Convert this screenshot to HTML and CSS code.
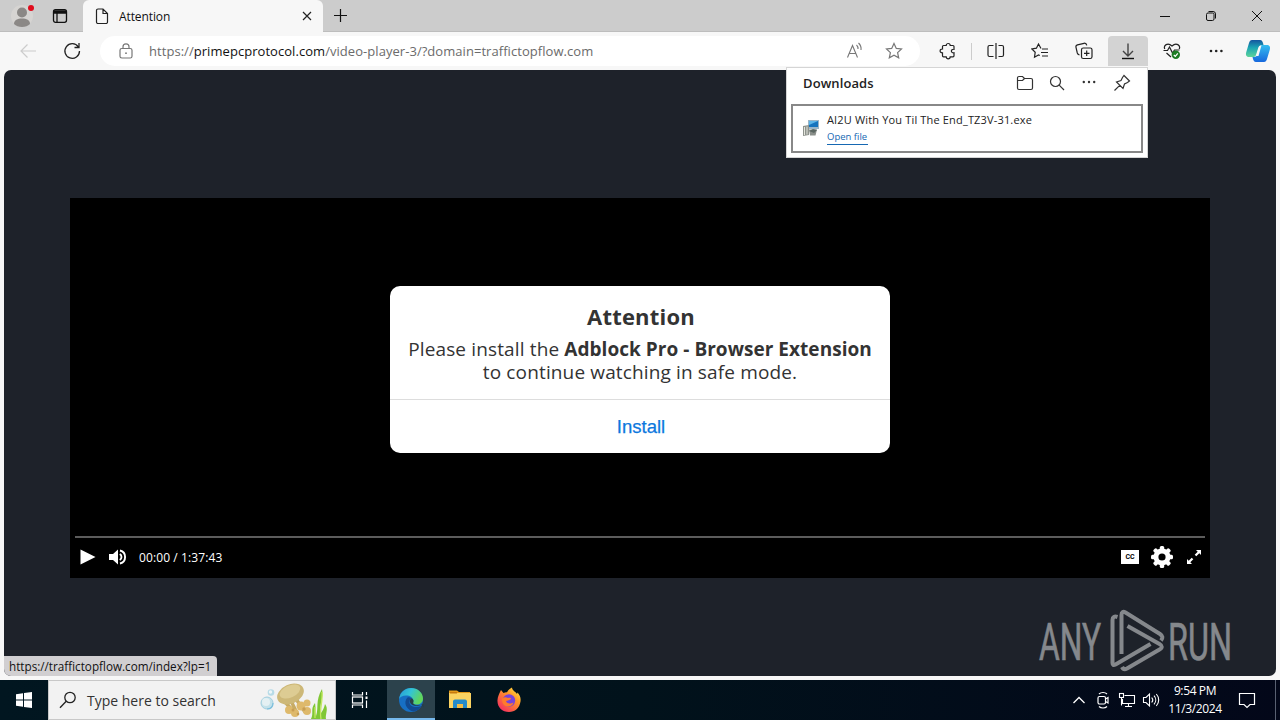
FILE: index.html
```html
<!DOCTYPE html>
<html lang="en">
<head>
	<meta charset="utf-8">
	<title>Attention</title>
	<link rel="stylesheet" href="styles.css">
</head>
<body>

<div class="tabbar">
	<div class="profile">
		<svg width="26" height="28" viewBox="0 0 26 28"><circle cx="12" cy="14" r="11" fill="#d6d4d2"/><circle cx="12" cy="10.500" r="5" fill="#8b8886"/><path d="M4 22c0-4 3.500-5.500 8-5.500s8 1.500 8 5.500c-2 2-4.500 3-8 3s-6-1-8-3z" fill="#8b8886"/><circle cx="21" cy="6" r="3" fill="#e00b1c"/></svg>
	</div>
	<div class="workspaces">
		<svg width="16" height="16" viewBox="0 0 16 16" fill="none" stroke="#111" stroke-width="1.300"><rect x="1.500" y="1.700" width="13" height="12.600" rx="2"/><path d="M2 4h12" stroke-width="3.500"/><path d="M5 4v10"/></svg>
	</div>
	<div class="tab">
		<svg width="14" height="17" viewBox="0 0 14 17" fill="none" stroke="#222" stroke-width="1.200"><path d="M3 1h5l4.500 4.500V14a1.500 1.500 0 0 1-1.500 1.500H3A1.500 1.500 0 0 1 1.500 14V2.500A1.500 1.500 0 0 1 3 1zM8 1v4.500h4.500"/></svg>
		<span class="tab-title">Attention</span>
		<svg width="10" height="10" viewBox="0 0 10 10" stroke="#222" stroke-width="1.200"><path d="M1 1l8 8M9 1L1 9"/></svg>
	</div>
	<div class="newtab">
		<svg width="15" height="15" viewBox="0 0 15 15" stroke="#111" stroke-width="1.200"><path d="M7.500 1v13M1 7.500h13"/></svg>
	</div>
	<div class="window-buttons">
		<span><svg width="10" height="10" viewBox="0 0 10 10" stroke="#111"><path d="M0 5.500h10"/></svg></span>
		<span><svg width="10" height="10" viewBox="0 0 10 10" fill="none" stroke="#111"><rect x=".5" y="2" width="7.500" height="7.500" rx="1.500"/><path d="M2.500.5H7A2.500 2.500 0 0 1 9.500 3v4.500"/></svg></span>
		<span><svg width="10" height="10" viewBox="0 0 10 10" stroke="#111"><path d="M0 0l10 10M10 0L0 10"/></svg></span>
	</div>
</div>

<div class="toolbar">
	<div class="nav back"><svg width="18" height="16" viewBox="0 0 18 16" fill="none" stroke="#ccc" stroke-width="1.200"><path d="M17 8H2M8.500 1.500L2 8l6.500 6.500"/></svg></div>
	<div class="nav reload"><svg width="18" height="18" viewBox="0 0 18 18" fill="none" stroke="#222" stroke-width="1.300"><path d="M15.300 5A7.300 7.300 0 1 0 16.500 9M16 1v4.500h-4.500"/></svg></div>
	<div class="address">
		<svg class="lock" width="14" height="16" viewBox="0 0 14 16" fill="none" stroke="#777" stroke-width="1.200"><rect x="1" y="5.500" width="12" height="9.500" rx="1.800"/><path d="M4 5.500V3.800a3 3 0 0 1 6 0v1.700"/><circle cx="7" cy="10.200" r=".9" fill="#777" stroke="none"/></svg>
		<span class="url">https://<b>primepcprotocol.com</b>/video-player-3/?domain=traffictopflow.com</span>
		<svg class="read" width="18" height="18" viewBox="0 0 18 18" fill="none" stroke="#777" stroke-width="1.100"><path d="M1.500 15.500l5-12 5 12M3.300 11.500h6.500M10.500 3a5 5 0 0 1 1.500 4M12.500 1a8 8 0 0 1 2.500 7"/></svg>
		<svg width="18" height="18" viewBox="0 0 18 18" fill="none" stroke="#777" stroke-width="1.200"><path d="M9 1.500l2.300 4.900 5.200.6-3.900 3.600 1.100 5.300L9 13.300l-4.700 2.600 1.100-5.300L1.500 7l5.200-.6z"/></svg>
	</div>
	<div class="tools">
		<div class="tool"><svg width="18" height="18" viewBox="0 0 18 18" fill="none" stroke="#222" stroke-width="1.200"><path d="M4.500 3.500h2.700a2 2 0 0 1 4 0H14a1 1 0 0 1 1 1v2.800c-3.500-.5-3.500 4 0 3.500v3a1 1 0 0 1-1 1h-2.800a2 2 0 0 1-4 0H4.500a1 1 0 0 1-1-1v-3c-3.200.2-3.200-4 0-3.800V4.500a1 1 0 0 1 1-1z"/></svg></div>
		<i class="sep"></i>
		<div class="tool"><svg width="18" height="18" viewBox="0 0 18 18" fill="none" stroke="#222" stroke-width="1.200"><path d="M9 1v16M6.500 3.500h-4A1.500 1.500 0 0 0 1 5v8a1.500 1.500 0 0 0 1.500 1.500h4M11.500 3.500H15A1.500 1.500 0 0 1 16.500 5v8a1.500 1.500 0 0 1-1.500 1.500h-3.500"/></svg></div>
		<div class="tool"><svg width="18" height="18" viewBox="0 0 18 18" fill="none" stroke="#222" stroke-width="1.200"><path d="M10 6.500L7.500 2 5.400 6.200.9 7l3.300 3.300-.7 4.900 4-2.300 1.300.6M11 7h6M10 10.500h7M11 14h6"/></svg></div>
		<div class="tool"><svg width="18" height="18" viewBox="0 0 18 18" fill="none" stroke="#222" stroke-width="1.200"><rect x="6.500" y="6" width="10.500" height="10.500" rx="1.800"/><path d="M11.700 8.500v5.500M9 11.300h5.500M4.500 13C2.800 12.400 2.600 12 2.300 11L1 5.300c-.3-1.200.4-2.200 1.500-2.500l6.500-1.500c1.500-.3 2.400.3 2.800 2"/></svg></div>
		<div class="tool active"><svg width="16" height="18" viewBox="0 0 16 18" fill="none" stroke="#444" stroke-width="1.400"><path d="M8 1.500v12M3 9l5 5 5-5"/><path d="M2 16.500h12" stroke="#111"/></svg></div>
		<div class="tool"><svg width="18" height="18" viewBox="0 0 18 18" fill="none" stroke="#222" stroke-width="1.200"><path d="M1.800 7C.2 3.500 4.500-.2 9 4c4.500-4.200 8.800-.5 7.200 3M.5 8.500h4L6.500 5l3 6 2-3h5M3.500 11L8 15"/><circle cx="12.800" cy="12.800" r="4.200" fill="#1c7c23" stroke="none"/><path d="M10.800 13l1.500 1.300 2.500-3" stroke="#fff"/></svg></div>
		<div class="tool"><svg width="16" height="4" viewBox="0 0 16 4" fill="#222"><circle cx="3" cy="2" r="1.300"/><circle cx="8.200" cy="2" r="1.300"/><circle cx="13.400" cy="2" r="1.300"/></svg></div>
		<div class="copilot"><svg width="26" height="24" viewBox="0 0 26 24">
			<defs>
				<linearGradient id="cpLeft" x1="0" y1="0" x2="0" y2="1"><stop offset="0" stop-color="#14569f"/><stop offset=".45" stop-color="#1ba5b4"/><stop offset="1" stop-color="#5fd49a"/></linearGradient>
				<linearGradient id="cpRight" x1="0" y1="0" x2="0" y2="1"><stop offset="0" stop-color="#35bdf0"/><stop offset="1" stop-color="#1768dd"/></linearGradient>
			</defs>
			<path d="M7 1h8c2 0 2.500 1.500 3 3l.5 2c-3 0-4.500.5-5.300 3L11 16c-.6 1.600-1.500 2-3 2H4c-3 0-3.500-2.500-2.700-5L4 4c.6-2 1.500-3 3-3z" fill="url(#cpLeft)"/>
			<path d="M19 23h-8c-2 0-2.500-1.500-3-3l-.5-2c3 0 4.500-.5 5.300-3L15 8c.6-1.600 1.500-2 3-2h4c3 0 3.500 2.500 2.700 5L22 20c-.6 2-1.500 3-3 3z" fill="url(#cpRight)"/>
			<path d="M14.300 7h2l-2.800 10h-2.300z" fill="#f7f7f7"/>
		</svg></div>
	</div>
</div>

<div class="page">
	<div class="player">
		<div class="stage">
			<div class="dialog">
				<div class="message">
					<h1>Attention</h1>
					<p><span class="light">Please install the </span><b>Adblock Pro - Browser Extension</b></p>
					<p class="light">to continue watching in safe mode.</p>
				</div>
				<div class="install">Install</div>
			</div>
		</div>
		<div class="progress"></div>
		<div class="controls">
			<svg width="16" height="16" viewBox="0 0 16 16" fill="#fff"><path d="M.5.500L15.500 8l-15 7.500z"/></svg>
			<svg class="sound" width="20" height="16" viewBox="0 0 20 16"><path d="M1 5h4l5-4.500v15L5 11H1z" fill="#fff"/><path d="M11.800 5a3.500 3.500 0 0 1 0 6M12 1.500a6.700 6.700 0 0 1 0 13" fill="none" stroke="#fff" stroke-width="1.900"/></svg>
			<span class="time">00:00 / 1:37:43</span>
			<span class="cc">CC</span>
			<svg class="gear" width="24" height="24" viewBox="0 0 24 24"><g fill="#fff"><circle cx="12" cy="12" r="8.500"/><g id="teeth"><rect x="9.800" y="1" width="4.400" height="22" rx="1.500"/><rect x="1" y="9.800" width="22" height="4.400" rx="1.500"/></g><use href="#teeth" transform="rotate(45 12 12)"/></g><circle cx="12" cy="12" r="3.600"/></svg>
			<svg width="16" height="16" viewBox="0 0 16 16" fill="#fff"><path d="M10 1h5v5l-1.700-1.700-3 3-1.600-1.600 3-3zM6 15H1v-5l1.700 1.700 3-3 1.600 1.600-3 3z"/></svg>
		</div>
	</div>
	<div class="status">https://traffictopflow.com/index?lp=1</div>
	<svg class="watermark" width="204" height="70" viewBox="0 0 204 70">
		<g fill="#85888c" stroke="#85888c" stroke-width=".7" font-family="Roboto, sans-serif" font-size="52">
			<text x="3" y="52" textLength="62" lengthAdjust="spacingAndGlyphs">ANY</text>
			<text x="132" y="52" textLength="64" lengthAdjust="spacingAndGlyphs">RUN</text>
		</g>
		<g fill="none" stroke="#85888c" stroke-width="4" stroke-linejoin="round">
			<path d="M81.500 9c-3-1-5 0-5 3v43c0 2 1 2.500 3 1.500l35-20.500"/>
			<path d="M85.500 46V7c0-3 1.500-4 4-2.500L124 26c3 2 3 4 1 6.500"/>
			<path d="M91.500 18l32 18c3 1.700 3 4 0 5.500L91 60.500c-2 1-4 .5-5-1.500"/>
		</g>
	</svg>
</div>

<div class="downloads">
	<div class="downloads-head">
		<b>Downloads</b>
		<svg width="18" height="16" viewBox="0 0 18 16" fill="none" stroke="#333" stroke-width="1.200"><path d="M1.500 3A1.500 1.500 0 0 1 3 1.500h3.500L8.500 3.500H15A1.500 1.500 0 0 1 16.500 5v8a1.500 1.500 0 0 1-1.500 1.500H3A1.500 1.500 0 0 1 1.500 13zM1.500 5.500h5l2-2"/></svg>
		<svg width="16" height="16" viewBox="0 0 16 16" fill="none" stroke="#333" stroke-width="1.200"><circle cx="6.500" cy="6.500" r="5"/><path d="M10.200 10.200L15 15"/></svg>
		<svg width="16" height="16" viewBox="0 0 16 16" fill="#333"><circle cx="2.800" cy="7" r="1.200"/><circle cx="8" cy="7" r="1.200"/><circle cx="13.200" cy="7" r="1.200"/></svg>
		<svg width="18" height="18" viewBox="0 0 18 18" fill="none" stroke="#333" stroke-width="1.200"><path d="M11 1.500l5.500 5.500-2 1.500-3 1.500-1.500 4.500-6.500-6.500L8 6.500l1.500-3zM6.700 11.300L1.500 16.500"/></svg>
	</div>
	<div class="download">
		<svg width="16" height="16" viewBox="0 0 16 16"><rect x="5" y="0" width="11" height="9" fill="#9bb5c7"/><rect x="6" y="1" width="9" height="6" fill="#1673bd"/><path d="M6 1h9l-9 4z" fill="#5db5e8"/><path d="M0 6l6-1v10l-6 1z" fill="#8e938d"/><path d="M1.500 7v8M4 6.500v8" stroke="#e5e6de"/><path d="M6 9.500h8L12.500 15.500H7z" fill="#8a8f8a"/><path d="M6 11l4-2 4 1-3 3z" fill="#5b6762"/></svg>
		<div>
			<div class="filename">AI2U With You Til The End_TZ3V-31.exe</div>
			<span class="openfile">Open file</span>
		</div>
	</div>
</div>

<div class="taskbar">
	<div class="start"><svg width="16" height="16" viewBox="0 0 16 16" fill="#fff"><path d="M0 2.200L7 1.200V7.500H0zM8 1.100L16 0v7.500H8zM0 8.500h7v6.300L0 13.800zM8 8.500h8V16L8 14.900z"/></svg></div>
	<div class="search">
		<svg width="18" height="18" viewBox="0 0 18 18" fill="none" stroke="#222" stroke-width="1.300"><circle cx="11" cy="6.500" r="5.200"/><path d="M7.200 10.300L1 16.800"/></svg>
		<span>Type here to search</span>
		<svg class="jelly" width="72" height="38" viewBox="0 0 72 38">
			<circle cx="9" cy="22" r="6" fill="#c3e1ea" stroke="#a3cfdf"/><circle cx="8" cy="21" r="4" fill="#e4f0f3"/><circle cx="13" cy="11.500" r="3.300" fill="#b7dbe7"/><circle cx="12.500" cy="11" r="1.700" fill="#edf5f7"/>
			<path d="M9 28c4 0 6-2 6-6" fill="none" stroke="#7bbfdd" stroke-width="1.200"/>
			<path d="M27 21l10 11M33 20l6 12M38 18l9 13" stroke="#c7ab64" stroke-width="3.500"/>
			<g fill="#deb96b"><circle cx="31" cy="29" r="4"/><circle cx="37" cy="32" r="4"/><circle cx="43" cy="25" r="4.500"/><circle cx="49" cy="30" r="4"/><circle cx="49" cy="22" r="3.500"/></g>
			<g fill="#c79d52"><circle cx="35" cy="29" r="1.500"/><circle cx="46" cy="28" r="1.700"/><circle cx="40" cy="33" r="1.300"/></g>
			<ellipse cx="32.500" cy="13" rx="14" ry="9.500" transform="rotate(-24 32.500 13)" fill="#cdb878"/><ellipse cx="32" cy="10.500" rx="11" ry="6" transform="rotate(-24 32 10.500)" fill="#ddcc93"/>
			<path d="M53 38c3-6-1-10 4-16 1 6 0 9 1 13C61 27 57 20 64 8c2 9-3 14-1 24 2-3 3-5 4-9 4 5 0 10 1 15z" fill="#80c735"/><path d="M63 38c-2-10 2-16 1-27M57 37V26" fill="none" stroke="#c4e963" stroke-width="1.300"/>
		</svg>
	</div>
	<div class="app taskview"><svg width="18" height="18" viewBox="0 0 18 18" fill="none" stroke="#fff" stroke-width="1.200"><path d="M1.500 1v3h10V1M1.500 17v-3h10v3M15.500 1v3M15.500 9.500V17"/><rect x="1.500" y="6" width="10" height="6"/><rect x="14.500" y="5.500" width="2" height="2.500" fill="#fff" stroke="none"/></svg></div>
	<div class="app current"><svg width="26" height="26" viewBox="0 0 26 26">
		<defs><linearGradient id="edgeTop" x1="0" y1="0" x2="1" y2=".4"><stop offset="0" stop-color="#2798d7"/><stop offset=".5" stop-color="#33c4d6"/><stop offset="1" stop-color="#61d65a"/></linearGradient></defs>
		<circle cx="13" cy="13" r="12" fill="#176fc4"/>
		<path d="M1.200 12C2 5 7 1 13 1c7 0 12 5 12 10.500 0 4-3 6-6.500 6-3 0-4.300-1-3.800-2.200C16.500 13 14 9 9.500 8.500 5.500 8 2.200 9.500 1.200 12z" fill="url(#edgeTop)"/>
		<path d="M9.500 10.500C5 15 8 23 15.500 24.500 19 24 22 22 23.500 19c-8 3-13-1-12-5 .3-1.500 1-2.200 2-2.500-1-1-2.500-1.500-4-1z" fill="#124a91"/>
		<path d="M13.500 11.300c-2.500 1.500-2.200 5 1 6.800 3 1.600 6.500 1.200 9-.6l2 3V17c-2 1.500-7 2-9.500.2-.8-.6-1-1.200-.6-2 .7-1.500-.2-3.200-1.900-3.900z" fill="#263d47"/>
	</svg></div>
	<div class="app"><svg width="24" height="22" viewBox="0 0 24 22"><path d="M1 3V1.500h8L11 3h11v5H1z" fill="#e59a19"/><path d="M1 4h22v15H1z" fill="#fbd361"/><path d="M2 3h7v1.500H2z" fill="#c77a0e"/><path d="M5 19v-7a2 2 0 0 1 2-1.500h10a2 2 0 0 1 2 1.500v7h-4v-4H9v4z" fill="#258bc9"/><path d="M9 15h6v4H9z" fill="#f2bc45"/></svg></div>
	<div class="app"><svg width="26" height="26" viewBox="0 0 26 26">
		<defs><linearGradient id="foxBody" x1="1" y1="0" x2=".2" y2="1"><stop offset="0" stop-color="#fff150"/><stop offset=".4" stop-color="#ff9925"/><stop offset="1" stop-color="#f52b62"/></linearGradient></defs>
		<path d="M4 5l1-2 2.500 3c1-.6 2-.8 3.500-.8 1-2 2.500-3.500 5-4.700 0 3 4 4.500 5 6.500l.5-1.500C24 8 25 11 24.500 14.500 23.500 21 19 25 13 25 6 25 1 20 1.500 13 1.700 9.500 3 7.500 4 5z" fill="url(#foxBody)"/><circle cx="13" cy="13.500" r="6.200" fill="#7643dc"/><path d="M6 12c2-2 4-2 6-1 2-.5 3 .3 3 1-2 1-3 2-5 2 1 3 5 3 7.500 1.500-1 4-6 5.500-9.500 2.500C6.500 16.500 6 14 6 12z" fill="#ff7b2c"/>
	</svg></div>
	<div class="tray">
		<svg width="14" height="8" viewBox="0 0 14 8" fill="none" stroke="#fff" stroke-width="1.300"><path d="M1.500 7L7 1.500 12.500 7"/></svg>
		<svg class="meet" width="14" height="18" viewBox="0 0 14 18" fill="none" stroke="#fff" stroke-width="1.200"><rect x="2" y="5.500" width="7.500" height="7.500" rx="1.500"/><path d="M9.500 8l2.500-1.500v5.500L9.500 10.500M3 3c2-2 6-2 8 0M3 15.500c2 2 6 2 8 0"/></svg>
		<svg width="18" height="16" viewBox="0 0 18 16" fill="none" stroke="#fff" stroke-width="1.100"><path d="M6.500 3.500h10v8h-12V7M10.500 11.500v3M7 14.500h7"/><rect x="1.500" y="1.500" width="4" height="4"/><path d="M3.500 5.500v8"/></svg>
		<svg class="vol" width="18" height="16" viewBox="0 0 18 16" fill="none" stroke="#fff" stroke-width="1.100"><path d="M1.500 5.500H4l3.500-3.500v12L4 10.500H1.500zM9.700 5.500c1.300 1.500 1.300 3.500 0 5M12 3.700c2.300 2.500 2.300 6.100 0 8.600M14.300 2c3.200 3.500 3.200 8.500 0 12"/></svg>
		<div class="clock">9:54 PM<br>11/3/2024</div>
		<svg width="18" height="18" viewBox="0 0 18 18" fill="none" stroke="#fff" stroke-width="1.200"><path d="M1.500 2.500h15v11H12l-3 3-3-3H1.500z"/></svg>
		<i class="peek"></i>
	</div>
</div>

</body>
</html>
```
FILE: styles.css
```css
* { box-sizing: border-box; }

body {
	margin: 0;
	width: 1280px;
	height: 720px;
	overflow: hidden;
	display: flex;
	flex-direction: column;
	background: #f7f7f7;
	color: #222;
	font-family: "Open Sans", sans-serif;
	font-size: 12px;
}

svg { display: block; flex: none; }

/* tabs */
.tabbar {
	height: 32px;
	flex: none;
	display: flex;
	background: #ccc;
	border-bottom: 1px solid #bdbdbd;
}
.profile { width: 44px; padding: 2px 0 0 10px; }
.workspaces { width: 39px; padding: 8px 0 0 8px; }
.tab {
	width: 240px;
	height: 32px;
	display: flex;
	align-items: center;
	padding: 0 11px 0 12px;
	background: #f7f7f7;
	border-radius: 6px 6px 0 0;
}
.tab-title {
	flex: 1;
	margin-left: 10px;
	font-size: 12px;
	letter-spacing: -0.1px;
	color: #111;
}
.newtab { padding: 8px 0 0 10px; }
.window-buttons { display: flex; margin-left: auto; }
.window-buttons span {
	width: 46px;
	display: flex;
	align-items: center;
	justify-content: center;
}

/* toolbar */
.toolbar {
	height: 38px;
	flex: none;
	display: flex;
	align-items: center;
}
.nav { width: 44px; display: flex; justify-content: center; }
.back { margin-left: 6px; }
.address {
	width: 820px;
	height: 30px;
	margin-left: 6px;
	padding: 0 17px 0 19px;
	display: flex;
	align-items: center;
	background: #fff;
	border-radius: 15px;
}
.url {
	flex: 1;
	margin-left: 16px;
	font-size: 13px;
	letter-spacing: 0.05px;
	color: #6b6b6b;
	white-space: nowrap;
}
.url b { font-weight: normal; color: #111; }
.read { margin-right: 21px; }
.tools { display: flex; align-items: center; margin-left: 8px; }
.tool {
	width: 40px;
	height: 30px;
	margin-right: 4px;
	display: flex;
	align-items: center;
	justify-content: center;
	border-radius: 4px;
}
.tool.active { background: #d3d3d3; border-radius: 4px 4px 0 0; }
.sep { width: 1px; height: 17px; margin: 0 4px 0 -1px; background: #ccc; }
.copilot { margin-left: 5px; }

/* page */
.page {
	position: relative;
	height: 606px;
	flex: none;
	margin: 0 4px 4px;
	padding: 128px 66px 0;
	background: #1e222a;
	border-radius: 7px;
}
.player {
	height: 380px;
	display: flex;
	flex-direction: column;
	padding: 0 5px;
	background: #000;
}
.stage {
	height: 338px;
	display: flex;
	justify-content: center;
	padding-top: 88px;
}
.dialog {
	width: 500px;
	height: 167px;
	background: #fff;
	border-radius: 10px;
	text-align: center;
	color: #333;
}
.message { height: 113px; padding-top: 14px; }
.message h1 {
	margin: 0 0 6px;
	padding-left: 2px;
	font-size: 22px;
	line-height: 32px;
	letter-spacing: 0.2px;
}
.message p { margin: 0; font-size: 19px; line-height: 23px; white-space: nowrap; }
.message .light { letter-spacing: 0.14px; }
.message b { letter-spacing: 0.04px; }
.install {
	height: 54px;
	padding-left: 2px;
	line-height: 54px;
	border-top: 1px solid #ddd;
	font-family: "Liberation Sans", Arial, sans-serif;
	font-size: 18.5px;
	color: #0d78de;
	-webkit-text-stroke: 0.25px #0d78de;
}
.progress { height: 2px; background: #5c5c5c; }
.controls {
	height: 38px;
	display: flex;
	align-items: center;
	padding: 0 3px 0 5px;
}
.sound { margin-left: 12px; }
.time { flex: 1; margin-left: 11px; font-size: 12px; letter-spacing: 0.1px; color: #fff; }
.cc {
	width: 18px;
	height: 14px;
	background: #fff;
	color: #000;
	font-family: Roboto, sans-serif;
	font-size: 7px;
	font-weight: bold;
	line-height: 15px;
	text-align: center;
}
.gear { margin: 0 12px 0 11px; }
.status {
	position: absolute;
	left: 0;
	bottom: 0;
	width: 213px;
	height: 20px;
	padding-left: 5px;
	line-height: 20px;
	background: #d1cfd1;
	border-radius: 0 4px 0 7px;
	font-size: 11.7px;
	color: #111;
	white-space: nowrap;
}
.watermark { position: absolute; right: 36px; bottom: -2px; overflow: visible; }

/* downloads flyout */
.downloads {
	position: absolute;
	left: 786px;
	top: 67px;
	width: 362px;
	height: 91px;
	padding: 0 4px;
	background: #fff;
	border: 1px solid #d5d5d5;
}
.downloads-head {
	height: 36px;
	display: flex;
	align-items: center;
	gap: 16px;
	padding: 0 12px 6px;
}
.downloads-head b { flex: 1; font-size: 13px; font-weight: 600; letter-spacing: 0.1px; }
.downloads-head b + svg { margin-right: -1px; }
.download {
	height: 49px;
	display: flex;
	align-items: flex-start;
	padding: 6px 10px 0;
	border: 2px solid #888;
}
.download svg { margin: 8px 8px 0 0; }
.filename { font-size: 11px; line-height: 16px; letter-spacing: 0.16px; white-space: nowrap; }
.openfile {
	display: block;
	width: 41px;
	height: 16px;
	margin-top: 1px;
	line-height: 16px;
	font-size: 9.5px;
	color: #1668b3;
	border-bottom: 1px solid #1668b3;
}

/* taskbar */
.taskbar {
	height: 40px;
	flex: none;
	display: flex;
	background: linear-gradient(90deg, #011620, #01121b 50%, #030719);
}
.start { width: 48px; display: flex; align-items: center; justify-content: center; }
.search {
	width: 288px;
	display: flex;
	align-items: center;
	padding: 0 5px 0 10px;
	background: #f2f2f2;
	border: 1px solid #c8c8c8;
	font-size: 14px;
	color: #333;
}
.search span { flex: 1; margin-left: 10px; white-space: nowrap; }
.app { width: 48px; margin-right: 1px; display: flex; align-items: center; justify-content: center; }
.taskview { margin-right: 3px; }
.current { background: #2c424c; border-bottom: 2px solid #76b9ed; padding-top: 2px; }
.tray {
	margin-left: auto;
	display: flex;
	align-items: center;
	color: #fff;
}
.meet { margin: 0 8px 0 10px; }
.vol { margin-left: 6px; }
.clock { width: 70px; line-height: 18px; text-align: center; letter-spacing: -0.38px; }
.tray .clock + svg { margin: 0 19px 0 8px; }
.peek { width: 1px; height: 40px; margin-right: 4px; background: #596071; }
```
